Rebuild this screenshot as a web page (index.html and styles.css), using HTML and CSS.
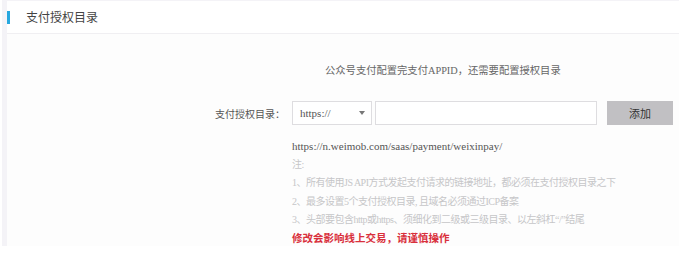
FILE: index.html
```html
<!DOCTYPE html>
<html lang="zh-CN">
<head>
    <meta charset="UTF-8">
    <meta name="viewport" content="width=device-width, initial-scale=1.0">
    <title>支付授权目录</title>
    <link rel="stylesheet" href="styles.css">
</head>
<body>
    <div class="panel">
        <div class="panel-header">
            <span class="title-bar"></span>
            <h2 class="panel-title">支付授权目录</h2>
        </div>
        <div class="panel-body">
            <p class="intro">公众号支付配置完支付APPID，还需要配置授权目录</p>
            <div class="form-row">
                <label class="form-label">支付授权目录：</label>
                <div class="form-controls">
                    <div class="select-box">
                        <span>https://</span>
                        <span class="caret"></span>
                    </div>
                    <input class="text-input" type="text">
                    <button class="add-button">添加</button>
                </div>
            </div>
            <div class="notes">
                <p class="url">https://n.weimob.com/saas/payment/weixinpay/</p>
                <p class="tip">注:</p>
                <p class="tip">1、所有使用JS API方式发起支付请求的链接地址，都必须在支付授权目录之下</p>
                <p class="tip">2、最多设置5个支付授权目录, 且域名必须通过ICP备案</p>
                <p class="tip">3、头部要包含http或https、须细化到二级或三级目录、以左斜杠“/”结尾</p>
                <p class="warning">修改会影响线上交易，请谨慎操作</p>
            </div>
        </div>
    </div>
</body>
</html>
```

FILE: styles.css
```css
body {
    margin: 0;
    background: #fff;
    font-family: "Liberation Serif", "Noto Sans CJK SC", serif;
    color: #555;
}

.panel {
    width: 672px;
    margin-left: 2px;
    padding: 1px 0 0 5px;
    background: #f4f3f7;
}

.panel-header {
    display: flex;
    align-items: center;
    height: 32px;
    background: #fff;
    border-bottom: 1px solid #f0eff2;
}

.title-bar {
    width: 3px;
    height: 13px;
    background: #27a8df;
}

.panel-title {
    margin: 0 0 0 16px;
    font-size: 12px;
    font-weight: normal;
    color: #444;
}

.panel-body {
    height: 212px;
    padding-top: 29px;
    box-sizing: border-box;
    background: #fdfdfd;
}

.intro {
    margin: 0 0 0 318px;
    font-size: 10.3px;
    line-height: 16px;
    color: #666;
}

.form-row {
    display: flex;
    align-items: center;
    margin-top: 22px;
}

.form-label {
    width: 278px;
    padding-right: 7px;
    text-align: right;
    font-size: 10px;
    color: #555;
}

.form-controls {
    display: flex;
    align-items: center;
}

.select-box {
    display: flex;
    align-items: center;
    justify-content: space-between;
    width: 80px;
    height: 24px;
    padding: 0 6px 0 7px;
    box-sizing: border-box;
    border: 1px solid #dedde0;
    background: #fff;
    font-size: 11px;
    color: #555;
}

.caret {
    width: 0;
    height: 0;
    border-left: 3px solid transparent;
    border-right: 3px solid transparent;
    border-top: 4px solid #777;
}

.text-input {
    width: 222px;
    height: 24px;
    margin: 0 0 0 3px;
    padding: 0;
    box-sizing: border-box;
    border: 1px solid #dedde0;
    background: #fff;
}

.add-button {
    width: 66px;
    height: 24px;
    margin-left: 10px;
    padding: 0;
    border: none;
    background: #c1c0c3;
    font-family: "Noto Sans CJK SC", sans-serif;
    font-size: 11px;
    color: #333;
}

.notes {
    margin: 12px 0 0 285px;
}

.notes p {
    margin: 0;
    font-size: 10px;
    line-height: 18.6px;
}

.notes .url {
    font-size: 11px;
    color: #555;
}

.tip {
    color: #c6c6c8;
    letter-spacing: -0.5px;
}

.notes .warning {
    color: #d9303c;
    font-weight: bold;
    font-size: 10.5px;
}
```
